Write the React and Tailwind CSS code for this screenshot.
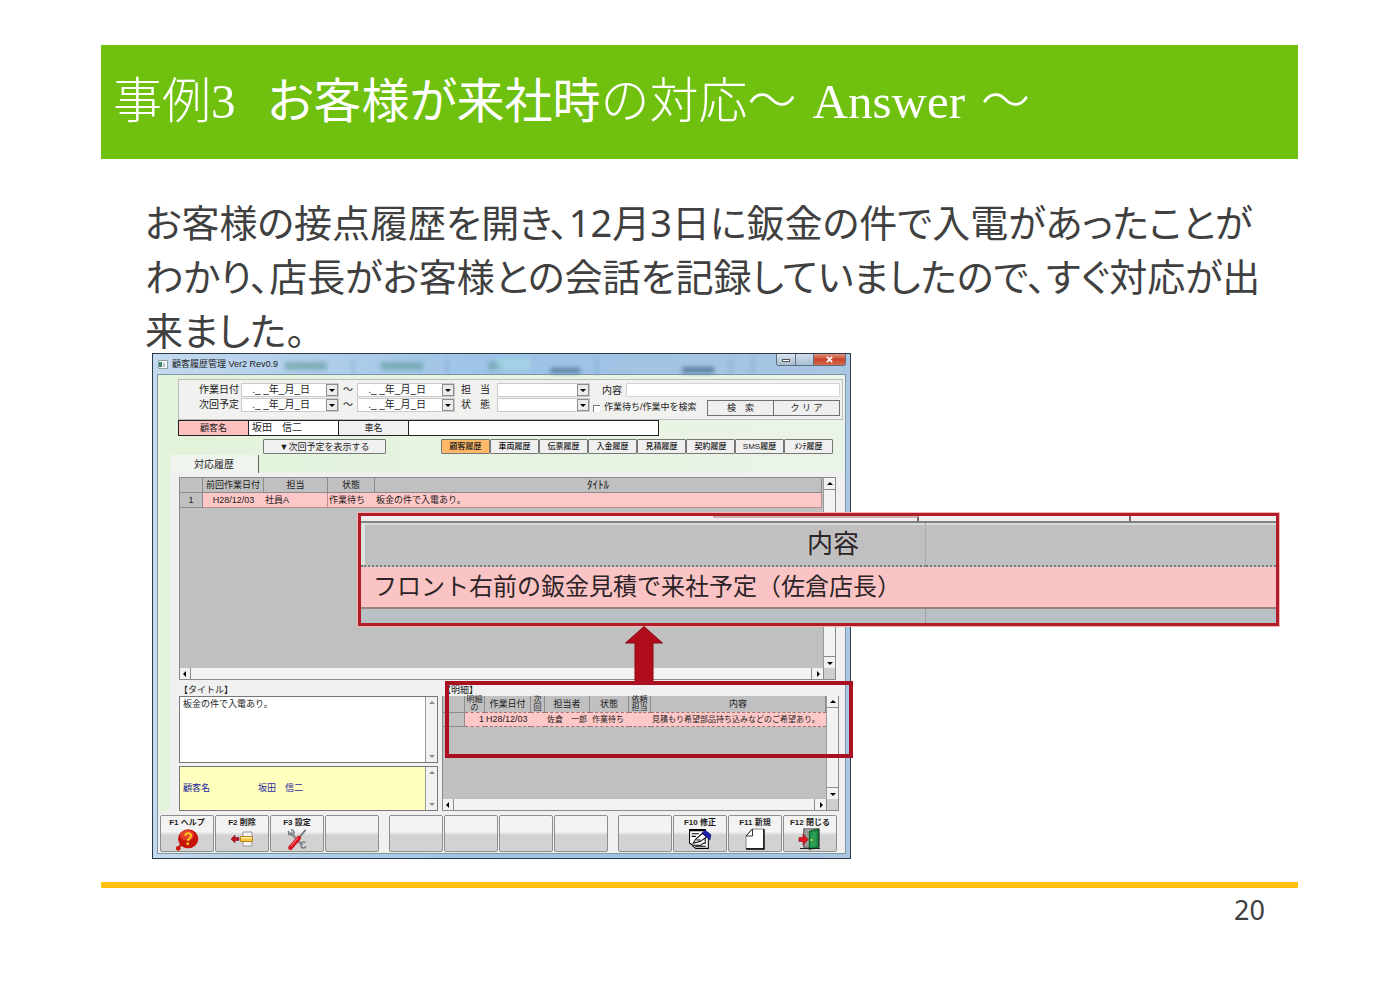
import React from "react";

const SANS = "font-['Liberation_Sans','Noto_Sans_CJK_JP',sans-serif]";

function Arrow({ dir = "down", faint = false }) {
  const paths = {
    down: "M1 3h6L4 6z",
    up: "M1 5h6L4 2z",
    left: "M5 1v6L2 4z",
    right: "M3 1v6l3-3z",
  };
  return (
    <svg viewBox="0 0 8 8" className="size-2 shrink-0" fill={faint ? "#8a8a8a" : "#000"} aria-hidden="true">
      <path d={paths[dir]} />
    </svg>
  );
}

function DateField({ label }) {
  return (
    <div className="flex h-[14px] border border-[#c9c9c9] bg-white">
      <input
        aria-label={label}
        defaultValue="._ _年_月_日"
        className="w-full min-w-0 flex-1 bg-transparent pr-4 text-right text-[10px] leading-3 outline-none"
      />
      <button
        type="button"
        aria-label={label + "を選択"}
        className="flex w-3 items-center justify-center border border-[#8d8d8d] bg-[#ececec]"
      >
        <Arrow />
      </button>
    </div>
  );
}

function Picker({ label }) {
  return (
    <div className="relative h-[14px] border border-[#c9c9c9] bg-white">
      <select aria-label={label} className="block h-3 w-full appearance-none bg-transparent text-[9px] outline-none">
        <option></option>
      </select>
      <span className="pointer-events-none absolute inset-y-0 right-0 flex w-3 items-center justify-center border border-[#8d8d8d] bg-[#ececec]">
        <Arrow />
      </span>
    </div>
  );
}

function SearchPanel() {
  return (
    <form className="ml-5 mr-[2px] flex h-[41px] border border-[#bcbcbc] bg-[#f1f1ef] pt-[3px]">
      <div className="grid grid-cols-[62px_98px_18px_98px_42px_93px] content-start gap-y-px text-[10px] leading-[14px]">
        <span className="pl-5">作業日付</span>
        <DateField label="作業日付 開始" />
        <span className="text-center">～</span>
        <DateField label="作業日付 終了" />
        <span className="flex justify-between pl-[6px] pr-[7px]"><span>担</span><span>当</span></span>
        <Picker label="担当" />
        <span className="pl-5">次回予定</span>
        <DateField label="次回予定 開始" />
        <span className="text-center">～</span>
        <DateField label="次回予定 終了" />
        <span className="flex justify-between pl-[6px] pr-[7px]"><span>状</span><span>態</span></span>
        <Picker label="状態" />
      </div>
      <div className="flex min-w-0 flex-1 flex-col gap-[3px] pr-[2px]">
        <label className="flex h-[14px] items-center gap-1 pl-3 text-[10px]">
          内容
          <input className="h-[14px] min-w-0 flex-1 border border-[#d5d5d5] bg-white outline-none" />
        </label>
        <div className="flex h-4 items-center">
          <label className="flex flex-1 items-center gap-1 whitespace-nowrap pl-[3px] text-[9px]">
            <input type="checkbox" className="size-[7px] appearance-none border-l border-t border-[#777] bg-white" />
            作業待ち/作業中を検索
          </label>
          <button type="button" className="h-4 w-[67px] border border-[#707070] bg-[#efefef] text-[9px] leading-3">検　索</button>
          <button type="button" className="h-4 w-[66px] border border-l-0 border-[#707070] bg-[#efefef] text-[9px] leading-3">ク リ ア</button>
        </div>
      </div>
    </form>
  );
}

const TABS = ["顧客履歴", "車両履歴", "伝票履歴", "入金履歴", "見積履歴", "契約履歴", "SMS履歴", "ﾒﾝﾃ履歴"];

function VScroll({ faint = false }) {
  return (
    <div className="flex w-3 shrink-0 flex-col items-center justify-between border-l border-[#9a9a9a] bg-[#f2f2f2]">
      <button type="button" aria-label="上へ" className={"flex h-3 w-full items-center justify-center " + (faint ? "" : "border-b border-[#8a8a8a]")}>
        <Arrow dir="up" faint={faint} />
      </button>
      <button type="button" aria-label="下へ" className={"flex h-3 w-full items-center justify-center " + (faint ? "" : "border-t border-[#8a8a8a]")}>
        <Arrow faint={faint} />
      </button>
    </div>
  );
}

function HScroll() {
  return (
    <div className="flex h-3 shrink-0 items-stretch border-b border-[#8a8a8a] bg-[#f2f2f2]">
      <button type="button" aria-label="左へ" className="flex w-[11px] items-center justify-center border-r border-[#8a8a8a]">
        <Arrow dir="left" />
      </button>
      <span className="flex-1" />
      <button type="button" aria-label="右へ" className="flex w-3 items-center justify-center border-l border-[#8a8a8a]">
        <Arrow dir="right" />
      </button>
      <span className="w-3 border-l border-[#8a8a8a] bg-[#cfcfcf]" />
    </div>
  );
}

const TH = "h-[15px] overflow-hidden border-b border-r border-[#8b8b8b] p-0 text-center font-normal";

function HistoryGrid() {
  return (
    <div className="flex h-[203px] flex-col border-l border-r border-t border-[#8a8a8a] bg-[#c0c0c0]">
      <div className="flex min-h-0 flex-1">
        <div className="min-w-0 flex-1 pr-px">
          <table className="w-full table-fixed border-separate border-spacing-0 whitespace-nowrap text-[9px] leading-[14px]">
            <colgroup>
              <col className="w-[23px]" />
              <col className="w-[61px]" />
              <col className="w-[64px]" />
              <col className="w-[47px]" />
              <col />
            </colgroup>
            <thead>
              <tr>
                <th className={TH} />
                <th className={TH}>前回作業日付</th>
                <th className={TH}>担当</th>
                <th className={TH}>状態</th>
                <th className={TH + " text-[11px]"}>ﾀｲﾄﾙ</th>
              </tr>
            </thead>
            <tbody>
              <tr className="bg-[#ffc8c8]">
                <td className="border-b border-r border-[#8b8b8b] bg-[#c0c0c0] p-0 text-center">1</td>
                <td className="border-b border-[#b88f8f] p-0 text-center">H28/12/03</td>
                <td className="border-b border-r border-[#b88f8f] p-0 pl-px">社員A</td>
                <td className="border-b border-[#b88f8f] p-0 pl-px">作業待ち</td>
                <td className="border-b border-r border-[#b88f8f] p-0 pl-px">板金の件で入電あり。</td>
              </tr>
            </tbody>
          </table>
        </div>
        <VScroll />
      </div>
      <HScroll />
    </div>
  );
}

const DETAIL_HEADS = [
  [""],
  ["明細", "の"],
  ["作業日付"],
  ["次", "回"],
  ["担当者"],
  ["状態"],
  ["依頼", "担当"],
  ["内容"],
];

function DetailGrid() {
  const cell = "border-y border-dashed border-[#9c7474] p-0";
  return (
    <div className="flex h-[115px] flex-col border-l border-r border-[#8a8a8a] bg-[#c0c0c0]">
      <div className="flex min-h-0 flex-1">
        <div className="min-w-0 flex-1">
          <table className="w-full table-fixed border-separate border-spacing-0 whitespace-nowrap text-[9px] leading-[13px]">
            <colgroup>
              <col className="w-[22px]" />
              <col className="w-5" />
              <col className="w-[46px]" />
              <col className="w-[14px]" />
              <col className="w-[45px]" />
              <col className="w-[39px]" />
              <col className="w-[22px]" />
              <col />
            </colgroup>
            <thead>
              <tr>
                {DETAIL_HEADS.map((lines, i) => (
                  <th key={i} className="border-r border-[#8b8b8b] p-0 text-center font-normal">
                    <div className={"h-4 " + (lines.length > 1 ? "text-[8px] leading-[8px]" : "leading-4")}>
                      {lines[0]}
                      {lines[1] ? <br /> : null}
                      {lines[1]}
                    </div>
                  </th>
                ))}
              </tr>
            </thead>
            <tbody>
              <tr className="bg-[#ffc8c8] text-[8px]">
                <td className="border border-[#8b8b8b] border-l-0 bg-[#c0c0c0] p-0" />
                <td className={cell + " pr-px text-right text-[9px]"}>1</td>
                <td className={cell + " pl-px text-[9px]"}>H28/12/03</td>
                <td className={cell} />
                <td className={cell + " pl-[2px]"}>佐倉　一郎</td>
                <td className={cell + " pl-[2px]"}>作業待ち</td>
                <td className={cell} />
                <td className={cell + " pl-px"}>見積もり希望部品持ち込みなどのご希望あり。</td>
              </tr>
            </tbody>
          </table>
        </div>
        <VScroll />
      </div>
      <HScroll />
    </div>
  );
}

function HelpIcon() {
  return (
    <svg viewBox="0 0 22 20" className="h-6 w-[26px] shrink-0" aria-hidden="true">
      <ellipse cx="12" cy="9" rx="8.6" ry="8" fill="#c81408" />
      <ellipse cx="11" cy="6" rx="6" ry="4.5" fill="#f0523c" opacity=".7" />
      <circle cx="3.6" cy="17" r="2" fill="#c81408" />
      <path d="M5 13l-1 3 4-1z" fill="#c81408" />
      <path d="M9.4 6.4c.6-3 5.2-2.8 5 .2-.1 2-2.4 2-2.6 4.2" fill="none" stroke="#ffc21c" strokeWidth="1.8" />
      <circle cx="11.6" cy="13.2" r="1.2" fill="#ffc21c" />
    </svg>
  );
}

function DeleteIcon() {
  return (
    <svg viewBox="0 0 24 18" className="h-[22px] w-6 shrink-0" aria-hidden="true">
      <path d="M13 6V2h9v4M13 12v4h9v-4" fill="#f5f5f5" stroke="#999" />
      <path d="M10.5 6.5h12v5h-12z" fill="#f4c542" stroke="#b8861b" />
      <path d="M11 7h11v1.5H11z" fill="#fff0b0" />
      <path d="M1 9l4-4v2.5h4v3H5V13z" fill="#c01822" stroke="#8c0c14" strokeWidth=".6" />
    </svg>
  );
}

function ToolsIcon() {
  return (
    <svg viewBox="0 0 22 20" className="h-[22px] w-6 shrink-0" aria-hidden="true">
      <path d="M5 4l11 12" stroke="#8b8f94" strokeWidth="2.4" />
      <path d="M3.2 2.5l.3 3.3 3.3.5M5.5 1.5c2 .2 3.2 1.8 2.6 4" fill="none" stroke="#777b80" strokeWidth="1.4" />
      <path d="M14.5 16.5c.5 2 3.5 2.4 4.6.2M18.6 13.2c-1.4-1-3.6-.4-4 1.4" fill="none" stroke="#777b80" strokeWidth="1.4" />
      <path d="M19 1.5l-7.5 9" stroke="#6b6f74" strokeWidth="1.6" />
      <path d="M12.6 9.2L5 18" stroke="#d81420" strokeWidth="4" strokeLinecap="round" />
      <path d="M11.8 9L5.4 16.4" stroke="#ff6b6b" strokeWidth="1" />
    </svg>
  );
}

function EditIcon() {
  return (
    <svg viewBox="0 0 23 21" className="h-[22px] w-6 shrink-0" aria-hidden="true">
      <path d="M4.5 5h15v14.5h-12l-3-2.5z" fill="#fff" stroke="#000" />
      <path d="M1.5 1.5h15v13h-2l-2 2h-8l-3-2z" fill="#fff" stroke="#000" />
      <path d="M1 2h16" stroke="#000" strokeWidth="2" />
      <path d="M3.5 5.5h7M3.5 8h4M7 17.5h10" stroke="#000" />
      <path d="M5 14.5l2.5-4L14 5l4 3.5-6.5 4.5z" fill="#fff" stroke="#000" />
      <path d="M8 11.5h4" stroke="#000" />
      <path d="M13.5 4.5l3-2.5 5.5 4.5-1 5-3.5-3z" fill="#2020b0" stroke="#101060" strokeWidth=".6" />
    </svg>
  );
}

function PageIcon() {
  return (
    <svg viewBox="0 0 20 22" className="h-[22px] w-5 shrink-0" aria-hidden="true">
      <path d="M7 1h11.5v19.5H1V8z" fill="#fff" stroke="#888" />
      <path d="M19 1v20H1" fill="none" stroke="#000" strokeWidth="1.4" />
      <path d="M7.5 1v7H1z" fill="#fff" stroke="#333" />
    </svg>
  );
}

function ExitIcon() {
  return (
    <svg viewBox="0 0 24 22" className="h-[22px] w-6 shrink-0" aria-hidden="true">
      <path d="M6 1h15v18H6z" fill="#fff" stroke="#222" strokeWidth="1.2" />
      <path d="M6.5 1.5h4v17h-4z" fill="#999" />
      <path d="M11 3L20.5 1v18.5L11 21.5z" fill="#14803a" stroke="#0a4a20" strokeWidth=".8" />
      <path d="M12.5 4.5l6-1.3v15l-6 1.3z" fill="#2c9d55" />
      <circle cx="13.6" cy="12" r="1" fill="#f2e05a" />
      <path d="M1 9.5h4V6l5 5.5L5 17v-3.500H1z" fill="#e01822" stroke="#8a0a10" strokeWidth=".6" />
      <path d="M2 20.5h20" stroke="#222" />
    </svg>
  );
}

const KEY_GROUPS = [
  [["F1 ヘルプ", HelpIcon], ["F2 削除", DeleteIcon], ["F3 設定", ToolsIcon], ["", null]],
  [["", null], ["", null], ["", null], ["", null]],
  [["", null], ["F10 修正", EditIcon], ["F11 新規", PageIcon], ["F12 閉じる", ExitIcon]],
];

function FunctionKeys() {
  return (
    <div className="flex justify-between pl-[2px] pr-2 pt-1">
      {KEY_GROUPS.map((group, g) => (
        <div key={g} className="flex gap-px">
          {group.map(([label, Icon], i) => (
            <button
              key={i}
              type="button"
              aria-label={label || "未割り当て"}
              className="flex h-[37px] w-[54px] flex-col items-center overflow-hidden rounded-[2px] border border-[#8e8e8e] bg-linear-to-b from-[#f3f3f3] from-45% to-[#d2d2d2] to-55% pt-px"
            >
              <span className="h-[11px] whitespace-nowrap text-[8px] font-bold leading-[11px]">{label}</span>
              {Icon ? <Icon /> : null}
            </button>
          ))}
        </div>
      ))}
    </div>
  );
}

function TitleBar() {
  return (
    <div className="relative flex h-5 items-start justify-between">
      <svg viewBox="0 0 690 20" preserveAspectRatio="none" className="absolute inset-0 size-full blur-[2px]" aria-hidden="true">
        <path d="M128 8h42v8h-42zM224 8h42v8h-42zM332 8h14v8h-14z" fill="#5f9a98" opacity=".6" />
        <path d="M340 4h34v12h-34z" fill="#a9dbe4" opacity=".6" />
        <path d="M394 14h30v5h-30zM526 13h32v6h-32z" fill="#3f6488" opacity=".7" />
        <path d="M196 5h1v15h-1zM290 5h1v15h-1zM440 4h1v16h-1zM574 4h1v16h-1zM596 4h1v16h-1z" fill="#6f95b5" />
      </svg>
      <div className="relative flex items-center gap-1 pl-px pt-1 text-[9px] leading-3">
        <svg viewBox="0 0 10 9" className="h-[9px] w-[10px]" aria-hidden="true">
          <path d="M.5.5h9v8h-9z" fill="#f4f8f4" stroke="#8aa0a8" />
          <path d="M1 2h3v5H1z" fill="#3b8c6c" />
          <path d="M6 3v4" stroke="#88a" />
        </svg>
        <span className="whitespace-nowrap">顧客履歴管理 Ver2 Rev0.9</span>
      </div>
      <div className="relative flex h-3 overflow-hidden rounded-b-[3px] border border-t-0 border-[#5d6f80]">
        <button type="button" aria-label="最小化" className="flex w-[19px] items-end justify-center border-r border-[#5d6f80] bg-linear-to-b from-[#dbe6f0] to-[#a9bccd] pb-[3px]">
          <span className="h-[3px] w-2 border border-[#555] bg-white" />
        </button>
        <button type="button" aria-label="最大化" className="w-[18px] border-r border-[#5d6f80] bg-linear-to-b from-[#d0deeb] to-[#a9c0d6]" />
        <button type="button" aria-label="閉じる" className="flex w-[31px] items-center justify-center bg-linear-to-b from-[#e0907c] via-[#c8432a] to-[#d46a4a]">
          <svg viewBox="0 0 8 8" className="size-[7px]" aria-hidden="true">
            <path d="M1 1l6 6M7 1L1 7" stroke="#fff" strokeWidth="2" />
          </svg>
        </button>
      </div>
    </div>
  );
}

function AppWindow() {
  return (
    <section
      aria-label="顧客履歴管理"
      className={"w-7/12 min-w-[699px] border border-[#2c3a48] bg-linear-to-r from-[#c3d9ee] via-[#9cc2e6] to-[#a9c6e2] px-1 pb-[4px] text-[#1c1c1c] " + SANS}
    >
      <TitleBar />
      <div className="border border-[#8097aa] bg-linear-to-r from-[#e2f3da] to-[#ebf4e8] pb-px pt-1">
        <SearchPanel />
        <div className="ml-5 mr-[186px] grid h-4 grid-cols-[70px_90px_70px_1fr] border border-[#222] bg-white text-[10px] leading-[14px]">
          <label htmlFor="customer" className="border-r border-[#222] bg-[#ffc0c0] text-center text-[9px]">顧客名</label>
          <input id="customer" defaultValue="坂田　信二" className="min-w-0 border-r border-[#222] pl-[3px] text-[10px] outline-none" />
          <label htmlFor="car" className="border-r border-[#222] bg-[#f0f0f0] text-center text-[9px]">車名</label>
          <input id="car" className="min-w-0 outline-none" />
        </div>
        <div className="mt-[3px] flex justify-between pl-[105px] pr-3">
          <button type="button" className="h-[15px] w-[123px] rounded-[1px] border border-[#777] bg-[#f0f0f0] text-[9px] leading-3">▼次回予定を表示する</button>
          <nav className="flex">
            {TABS.map((t, i) => (
              <button
                key={t}
                type="button"
                className={"h-[15px] w-[49px] whitespace-nowrap rounded-[1px] border border-[#777] text-[8px] font-medium leading-3 " + (i === 0 ? "bg-[#fdb868]" : "bg-[#f0f0f0]")}
              >
                {t}
              </button>
            ))}
          </nav>
        </div>
        <div className="ml-3 mt-px flex h-[18px] w-[89px] items-center justify-center border-r border-[#666] bg-[#f0f4ee] text-[10px]">
          対応履歴
        </div>
        <div className="ml-3 bg-[#f0f0f0] pl-[9px] pr-[9px] pt-1">
          <HistoryGrid />
          <div className="mt-1 grid grid-cols-[259px_1fr] gap-1">
            <div className="flex flex-col">
              <label htmlFor="title" className="h-3 text-[9px] leading-3">【タイトル】</label>
              <div className="flex h-[67px] border border-[#777] bg-white">
                <textarea id="title" defaultValue="板金の件で入電あり。" className="min-w-0 flex-1 resize-none overflow-hidden pl-[3px] text-[9px] leading-[14px] outline-none" />
                <VScroll faint />
              </div>
              <div className="mt-[3px] flex h-[45px] border border-[#777] bg-[#ffffbe] text-[#1c1ca0]">
                <p className="flex flex-1 items-center gap-12 pl-[3px] text-[9px]">
                  <span>顧客名</span>
                  <span>坂田　信二</span>
                </p>
                <VScroll faint />
              </div>
            </div>
            <div className="-mr-[3px] flex min-w-0 flex-col">
              <h2 className="h-3 text-[9px] leading-3">【明細】</h2>
              <DetailGrid />
            </div>
          </div>
        </div>
        <div className="bg-[#f0f0f0]">
          <FunctionKeys />
        </div>
      </div>
    </section>
  );
}

function Callout() {
  return (
    <div className={"absolute left-[206px] top-[160px] h-[113px] w-[921px] border-[3px] border-[#b01c28] bg-[#c0c0c0] text-[#2c2428] outline outline-[#f5b5b5] " + SANS}>
      <div className="flex h-[7px] border-b-2 border-[#7d8480] bg-[#f6eeee]">
        <span className="w-[352px]" />
        <span className="w-[206px] border-r-2 border-t-2 border-[#7d6464] border-t-[#c9b4b4]" />
        <span className="w-[212px] border-r-2 border-[#7d6464]" />
      </div>
      <table className="w-full table-fixed border-separate border-spacing-0 text-left text-2xl">
        <thead>
          <tr>
            <th className="h-[44px] w-[565px] border-b-2 border-r border-dotted border-[#777] border-r-[#999] p-0 pr-[66px] text-right text-[26px] font-normal leading-8 shadow-[inset_4px_0_0_#dde3dd,inset_0_2px_0_#d6dcd6]">内容</th>
            <th className="border-b-2 border-dotted border-[#777] p-0 shadow-[inset_0_2px_0_#d6dcd6]" />
          </tr>
        </thead>
        <tbody>
          <tr className="bg-[#fbc4c4]">
            <td colSpan={2} className="h-[42px] border-b-2 border-[#9c8080] p-0 pl-3 text-2xl leading-8">フロント右前の鈑金見積で来社予定（佐倉店長）</td>
          </tr>
        </tbody>
      </table>
      <div className="h-[14px] bg-[#b9c0c5]">
        <div className="h-full w-[565px] border-r border-[#a0a0a0]" />
      </div>
    </div>
  );
}

export default function App() {
  return (
    <main className="min-h-screen bg-white pb-16 pl-[101px] pr-[102px] pt-[45px] font-['Noto_Sans_CJK_JP',sans-serif]">
      <header className="flex h-[114px] items-center bg-[#70c010] pl-3 text-white">
        <h1 className="flex items-baseline whitespace-nowrap text-[49px] font-light font-['Liberation_Serif','Noto_Sans_CJK_JP',serif]">
          <span>事例3</span>
          <span className="ml-8 text-5xl font-normal font-['Noto_Sans_CJK_JP',sans-serif] [font-feature-settings:'palt']">お客様が来社時</span>
          <span>の対応～</span>
          <span className="ml-4">Answer</span>
          <span className="ml-4">～</span>
        </h1>
      </header>
      <p className="mt-9 whitespace-nowrap pl-11 text-[38px] leading-[54px] text-[#404040] [font-feature-settings:'palt'] font-['Noto_Sans','Noto_Sans_CJK_JP',sans-serif]">
        お客様の接点履歴を開き、12月3日に鈑金の件で入電があったことが
        <br />
        わかり、店長がお客様との会話を記録していましたので、すぐ対応が出
        <br />
        来ました。
      </p>
      <div className="relative -mt-1 ml-[51px]">
        <AppWindow />
        <Callout />
        <svg viewBox="0 0 38 56" className="absolute left-[473px] top-[273px] h-14 w-[38px]" aria-hidden="true">
          <path d="M19 .5L37.5 17H28v39H10V17H.5z" fill="#b00c1c" stroke="#8a0a16" />
        </svg>
        <div className="absolute left-[293px] top-[328px] h-[77px] w-[408px] border-4 border-[#ab1020]" />
      </div>
      <footer className="mt-[23px] border-t-[6px] border-[#ffc010] pr-[33px] pt-[6px] text-right text-[27px] leading-8 text-[#404040] font-['Noto_Sans',sans-serif]">
        20
      </footer>
    </main>
  );
}
